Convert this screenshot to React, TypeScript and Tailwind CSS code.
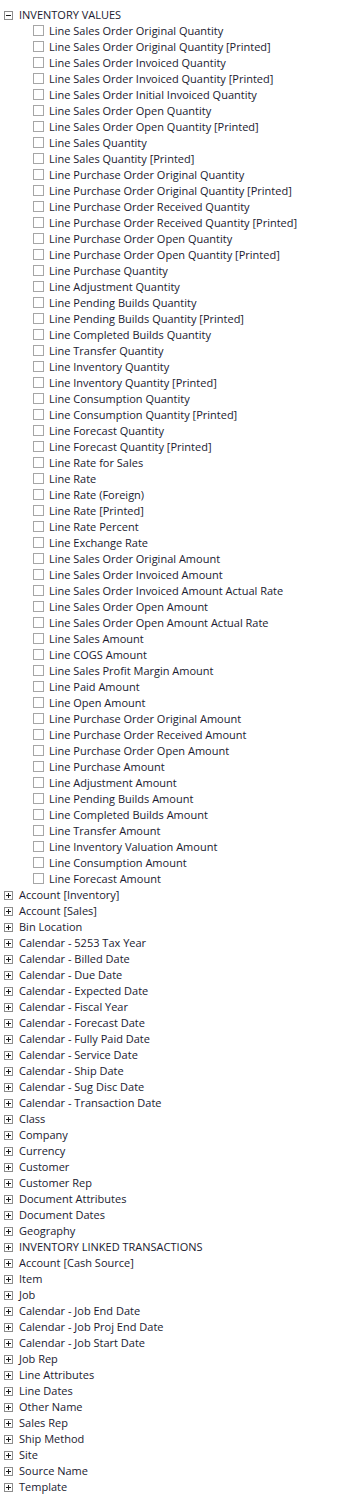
import React from 'react';

const values = [
  'Line Sales Order Original Quantity',
  'Line Sales Order Original Quantity [Printed]',
  'Line Sales Order Invoiced Quantity',
  'Line Sales Order Invoiced Quantity [Printed]',
  'Line Sales Order Initial Invoiced Quantity',
  'Line Sales Order Open Quantity',
  'Line Sales Order Open Quantity [Printed]',
  'Line Sales Quantity',
  'Line Sales Quantity [Printed]',
  'Line Purchase Order Original Quantity',
  'Line Purchase Order Original Quantity [Printed]',
  'Line Purchase Order Received Quantity',
  'Line Purchase Order Received Quantity [Printed]',
  'Line Purchase Order Open Quantity',
  'Line Purchase Order Open Quantity [Printed]',
  'Line Purchase Quantity',
  'Line Adjustment Quantity',
  'Line Pending Builds Quantity',
  'Line Pending Builds Quantity [Printed]',
  'Line Completed Builds Quantity',
  'Line Transfer Quantity',
  'Line Inventory Quantity',
  'Line Inventory Quantity [Printed]',
  'Line Consumption Quantity',
  'Line Consumption Quantity [Printed]',
  'Line Forecast Quantity',
  'Line Forecast Quantity [Printed]',
  'Line Rate for Sales',
  'Line Rate',
  'Line Rate (Foreign)',
  'Line Rate [Printed]',
  'Line Rate Percent',
  'Line Exchange Rate',
  'Line Sales Order Original Amount',
  'Line Sales Order Invoiced Amount',
  'Line Sales Order Invoiced Amount Actual Rate',
  'Line Sales Order Open Amount',
  'Line Sales Order Open Amount Actual Rate',
  'Line Sales Amount',
  'Line COGS Amount',
  'Line Sales Profit Margin Amount',
  'Line Paid Amount',
  'Line Open Amount',
  'Line Purchase Order Original Amount',
  'Line Purchase Order Received Amount',
  'Line Purchase Order Open Amount',
  'Line Purchase Amount',
  'Line Adjustment Amount',
  'Line Pending Builds Amount',
  'Line Completed Builds Amount',
  'Line Transfer Amount',
  'Line Inventory Valuation Amount',
  'Line Consumption Amount',
  'Line Forecast Amount',
];

const folders = [
  'Account [Inventory]',
  'Account [Sales]',
  'Bin Location',
  'Calendar - 5253 Tax Year',
  'Calendar - Billed Date',
  'Calendar - Due Date',
  'Calendar - Expected Date',
  'Calendar - Fiscal Year',
  'Calendar - Forecast Date',
  'Calendar - Fully Paid Date',
  'Calendar - Service Date',
  'Calendar - Ship Date',
  'Calendar - Sug Disc Date',
  'Calendar - Transaction Date',
  'Class',
  'Company',
  'Currency',
  'Customer',
  'Customer Rep',
  'Document Attributes',
  'Document Dates',
  'Geography',
  'INVENTORY LINKED TRANSACTIONS',
  'Account [Cash Source]',
  'Item',
  'Job',
  'Calendar - Job End Date',
  'Calendar - Job Proj End Date',
  'Calendar - Job Start Date',
  'Job Rep',
  'Line Attributes',
  'Line Dates',
  'Other Name',
  'Sales Rep',
  'Ship Method',
  'Site',
  'Source Name',
  'Template',
];

// tree toggle: minus when open, plus when collapsed
const ExpandBox = ({ open }: { open?: boolean }) => (
  <svg width="9" height="9" viewBox="0 0 9 9" className="shrink-0">
    <rect x="0.5" y="0.5" width="8" height="8" fill="white" stroke="#8c8c8c" />
    <path d="M2 4.5h5" stroke="#1a1a1a" />
    {!open && <path d="M4.5 2v5" stroke="#1a1a1a" />}
  </svg>
);

const Folder = ({ label, open }: { label: string; open?: boolean }) => (
  <div className="flex items-center h-4 pl-[4px]">
    <ExpandBox open={open} />
    <span className="ml-[6px] whitespace-nowrap">{label}</span>
  </div>
);

const Field = ({ label }: { label: string }) => (
  <div className="flex items-center h-4 pl-[33px]">
    <div className="w-[11px] h-[11px] border border-[#a6a6a6] bg-white shrink-0 -mt-[1px]" />
    <span className="ml-[5px] whitespace-nowrap">{label}</span>
  </div>
);

export default function App() {
  return (
    <div className="w-[343px] h-[1495px] bg-white overflow-hidden pt-[7px] text-[11px] leading-4 text-[#1a1a30]" style={{ fontFamily: '"Open Sans", "Noto Sans", sans-serif' }}>
      <Folder label="INVENTORY VALUES" open />
      {values.map(v => <Field key={v} label={v} />)}
      {folders.map(f => <Folder key={f} label={f} />)}
    </div>
  );
}
